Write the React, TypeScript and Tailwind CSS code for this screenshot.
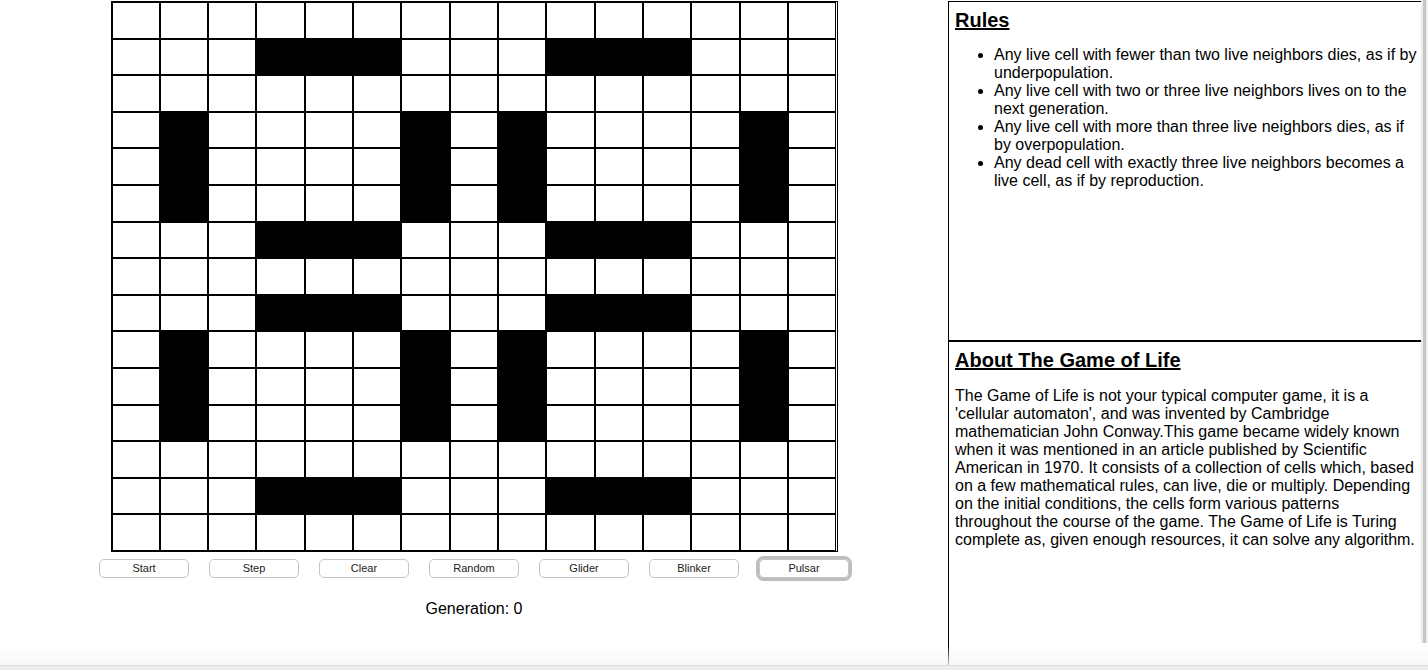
import React from "react";

const ROWS = 15;
const COLS = 15;

const live = new Set<string>();
const bars = [1, 6, 8, 13];
const barCols = [3, 4, 5, 9, 10, 11];
const vRows = [3, 4, 5, 9, 10, 11];
const vCols = [1, 6, 8, 13];
bars.forEach((r) => barCols.forEach((c) => live.add(`${r}-${c}`)));
vRows.forEach((r) => vCols.forEach((c) => live.add(`${r}-${c}`)));

const buttons = ["Start", "Step", "Clear", "Random", "Glider", "Blinker", "Pulsar"];

const aboutLines = [
  "The Game of Life is not your typical computer game, it is a",
  "'cellular automaton', and was invented by Cambridge",
  "mathematician John Conway.This game became widely known",
  "when it was mentioned in an article published by Scientific",
  "American in 1970. It consists of a collection of cells which, based",
  "on a few mathematical rules, can live, die or multiply. Depending",
  "on the initial conditions, the cells form various patterns",
  "throughout the course of the game. The Game of Life is Turing",
  "complete as, given enough resources, it can solve any algorithm.",
];

export default function App() {
  const cells = [];
  for (let r = 0; r < ROWS; r++) {
    for (let c = 0; c < COLS; c++) {
      const on = live.has(`${r}-${c}`);
      cells.push(
        <div
          key={`${r}-${c}`}
          className={`border border-black ${on ? "bg-black" : "bg-white"}`}
        />
      );
    }
  }
  return (
    <div
      className="relative w-[1428px] h-[670px] overflow-hidden bg-white text-black"
      style={{ fontFamily: '"Liberation Sans", Arial, sans-serif' }}
    >
      <div className="flex pt-[1px]">
        {/* Left column */}
        <div className="w-[948px] flex flex-col items-center">
          <div className="grid grid-cols-[repeat(15,1fr)] grid-rows-[repeat(15,1fr)] w-[727px] h-[551px] border border-black">
            {cells}
          </div>
          <div className="flex gap-[20px] mt-[7px]">
            {buttons.map((b) =>
              b === "Pulsar" ? (
                <button
                  key={b}
                  className="w-[90px] h-[19px] rounded-[5px] border border-[#c4c4c4] bg-white text-[11px] leading-[17px] text-[#222] outline outline-[3px] outline-[#bdbdbd]"
                >
                  {b}
                </button>
              ) : (
                <button
                  key={b}
                  className="w-[90px] h-[19px] rounded-[5px] border border-[#c4c4c4] bg-white text-[11px] leading-[17px] text-[#222]"
                >
                  {b}
                </button>
              )
            )}
          </div>
          <div className="mt-[22px] text-[16px] leading-[18px]">Generation: 0</div>
        </div>

        {/* Right column */}
        <div className="w-[480px] flex flex-col">
          <div className="h-[340px] border border-black px-[6px] pt-[6px]">
            <h3 className="text-[20px] leading-[24px] font-bold underline">Rules</h3>
            <ul className="mt-[14px] list-disc pl-[39px] text-[16px] leading-[18px]">
              <li>Any live cell with fewer than two live neighbors dies, as if by underpopulation.</li>
              <li>Any live cell with two or three live neighbors lives on to the next generation.</li>
              <li>Any live cell with more than three live neighbors dies, as if by overpopulation.</li>
              <li>Any dead cell with exactly three live neighbors becomes a live cell, as if by reproduction.</li>
            </ul>
          </div>
          <div className="h-[340px] border-l border-t border-black px-[6px] pt-[6px]">
            <h3 className="text-[20px] leading-[24px] font-bold underline">About The Game of Life</h3>
            <p className="mt-[15px] text-[16px] leading-[18px]">
              {aboutLines.map((l, i) => (
                <span key={i} className="block whitespace-nowrap">
                  {l}
                </span>
              ))}
            </p>
          </div>
        </div>
      </div>

      {/* overlay scrollbars */}
      <div className="absolute right-0 top-0 w-[7px] h-[643px] flex">
        <div className="w-[2px] bg-[#ececec]" />
        <div className="w-[3px] bg-[#c6c6c6]" />
        <div className="w-[2px] bg-[#efefef]" />
      </div>
      <div className="absolute left-0 bottom-0 w-full h-[25px] bg-gradient-to-b from-transparent to-[#f6f6f6]" />
      <div className="absolute left-0 bottom-0 w-full h-[5px] bg-[#eeeeee] border-t border-[#dddddd]" />
    </div>
  );
}
